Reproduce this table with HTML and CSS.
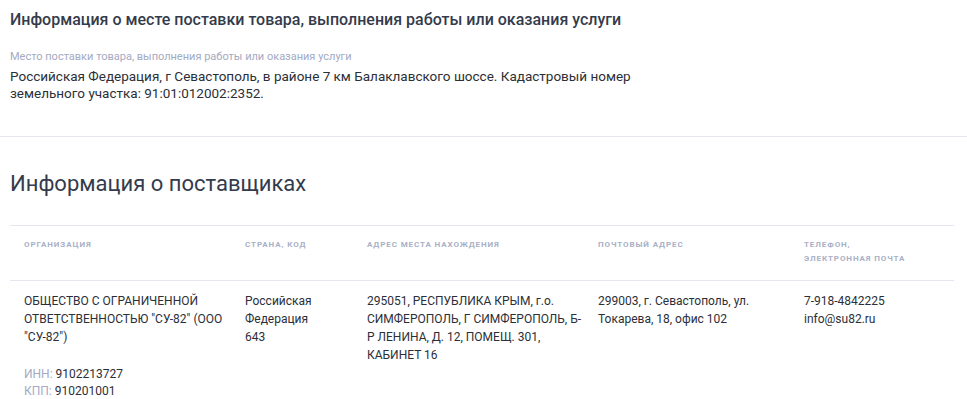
FILE: index.html
```html
<!DOCTYPE html>
<html lang="ru">
<head>
  <meta charset="UTF-8" />
  <title>Информация о поставщиках</title>
  <link rel="stylesheet" href="styles.css">
</head>
<body>
  <section class="delivery">
    <h3>Информация о месте поставки товара, выполнения работы или оказания услуги</h3>
    <div class="field">
      <div class="field-label">Место поставки товара, выполнения работы или оказания услуги</div>
      <div class="field-value">Российская Федерация, г Севастополь, в районе 7 км Балаклавского шоссе. Кадастровый номер земельного участка: 91:01:012002:2352.</div>
    </div>
  </section>

  <section class="suppliers">
    <h2>Информация о поставщиках</h2>
    <table class="suppliers-table">
      <thead>
        <tr>
          <th class="col-org">Организация</th>
          <th class="col-country">Страна, код</th>
          <th class="col-addr">Адрес места нахождения</th>
          <th class="col-post">Почтовый адрес</th>
          <th class="col-contact">Телефон,<br>электронная почта</th>
        </tr>
      </thead>
      <tbody>
        <tr>
          <td>
            ОБЩЕСТВО С ОГРАНИЧЕННОЙ ОТВЕТСТВЕННОСТЬЮ "СУ-82" (ООО "СУ-82")
            <div class="requisites">
              <div><span class="muted">ИНН:</span> 9102213727</div>
              <div><span class="muted">КПП:</span> 910201001</div>
            </div>
          </td>
          <td>Российская Федерация<br>643</td>
          <td>295051, РЕСПУБЛИКА КРЫМ, г.о. СИМФЕРОПОЛЬ, Г СИМФЕРОПОЛЬ, Б-Р ЛЕНИНА, Д. 12, ПОМЕЩ. 301, КАБИНЕТ 16</td>
          <td>299003, г. Севастополь, ул. Токарева, 18, офис 102</td>
          <td>7-918-4842225<br>info@su82.ru</td>
        </tr>
      </tbody>
    </table>
  </section>
</body>
</html>
```

FILE: styles.css
```css
* {
  box-sizing: border-box;
  margin: 0;
  padding: 0;
}

body {
  font-family: Roboto, 'Noto Sans', sans-serif;
  background-color: #ffffff;
  color: #2b2f38;
}

/* Delivery place */
.delivery {
  padding: 10px 10px 34px;
  border-bottom: 1px solid #e6e6f2;
}

.delivery h3 {
  font-size: 16px;
  font-weight: 500;
  line-height: 19px;
  color: #343b4c;
}

.field {
  margin-top: 21px;
  max-width: 640px;
}

.field-label {
  font-size: 11px;
  line-height: 13px;
  color: #a3aac2;
  margin-bottom: 5px;
}

.field-value {
  font-size: 13.5px;
  line-height: 17px;
  color: #2b2f38;
}

/* Suppliers */
.suppliers {
  padding: 33px 10px 0;
}

.suppliers h2 {
  font-size: 22px;
  font-weight: 400;
  line-height: 28px;
  color: #343b4c;
  margin-bottom: 27px;
}

.suppliers-table {
  width: 944px;
  border-collapse: collapse;
  table-layout: fixed;
}

.suppliers-table th {
  text-align: left;
  vertical-align: top;
  font-size: 8px;
  font-weight: 700;
  letter-spacing: 0.9px;
  line-height: 14px;
  text-transform: uppercase;
  color: #a9b0c6;
  padding: 12px 14px 14px;
  border-top: 1px solid #e6e6f2;
  border-bottom: 1px solid #e6e6f2;
}

.suppliers-table td {
  vertical-align: top;
  font-size: 12px;
  line-height: 18px;
  color: #2b2f38;
  padding: 11px 0 0 14px;
}

.col-org { width: 221px; }
.col-country { width: 122px; }
.col-addr { width: 231px; }
.col-post { width: 206px; }
.col-contact { width: 164px; }

.requisites {
  margin-top: 20px;
  line-height: 17px;
}

.muted {
  color: #a3aac2;
}
```
